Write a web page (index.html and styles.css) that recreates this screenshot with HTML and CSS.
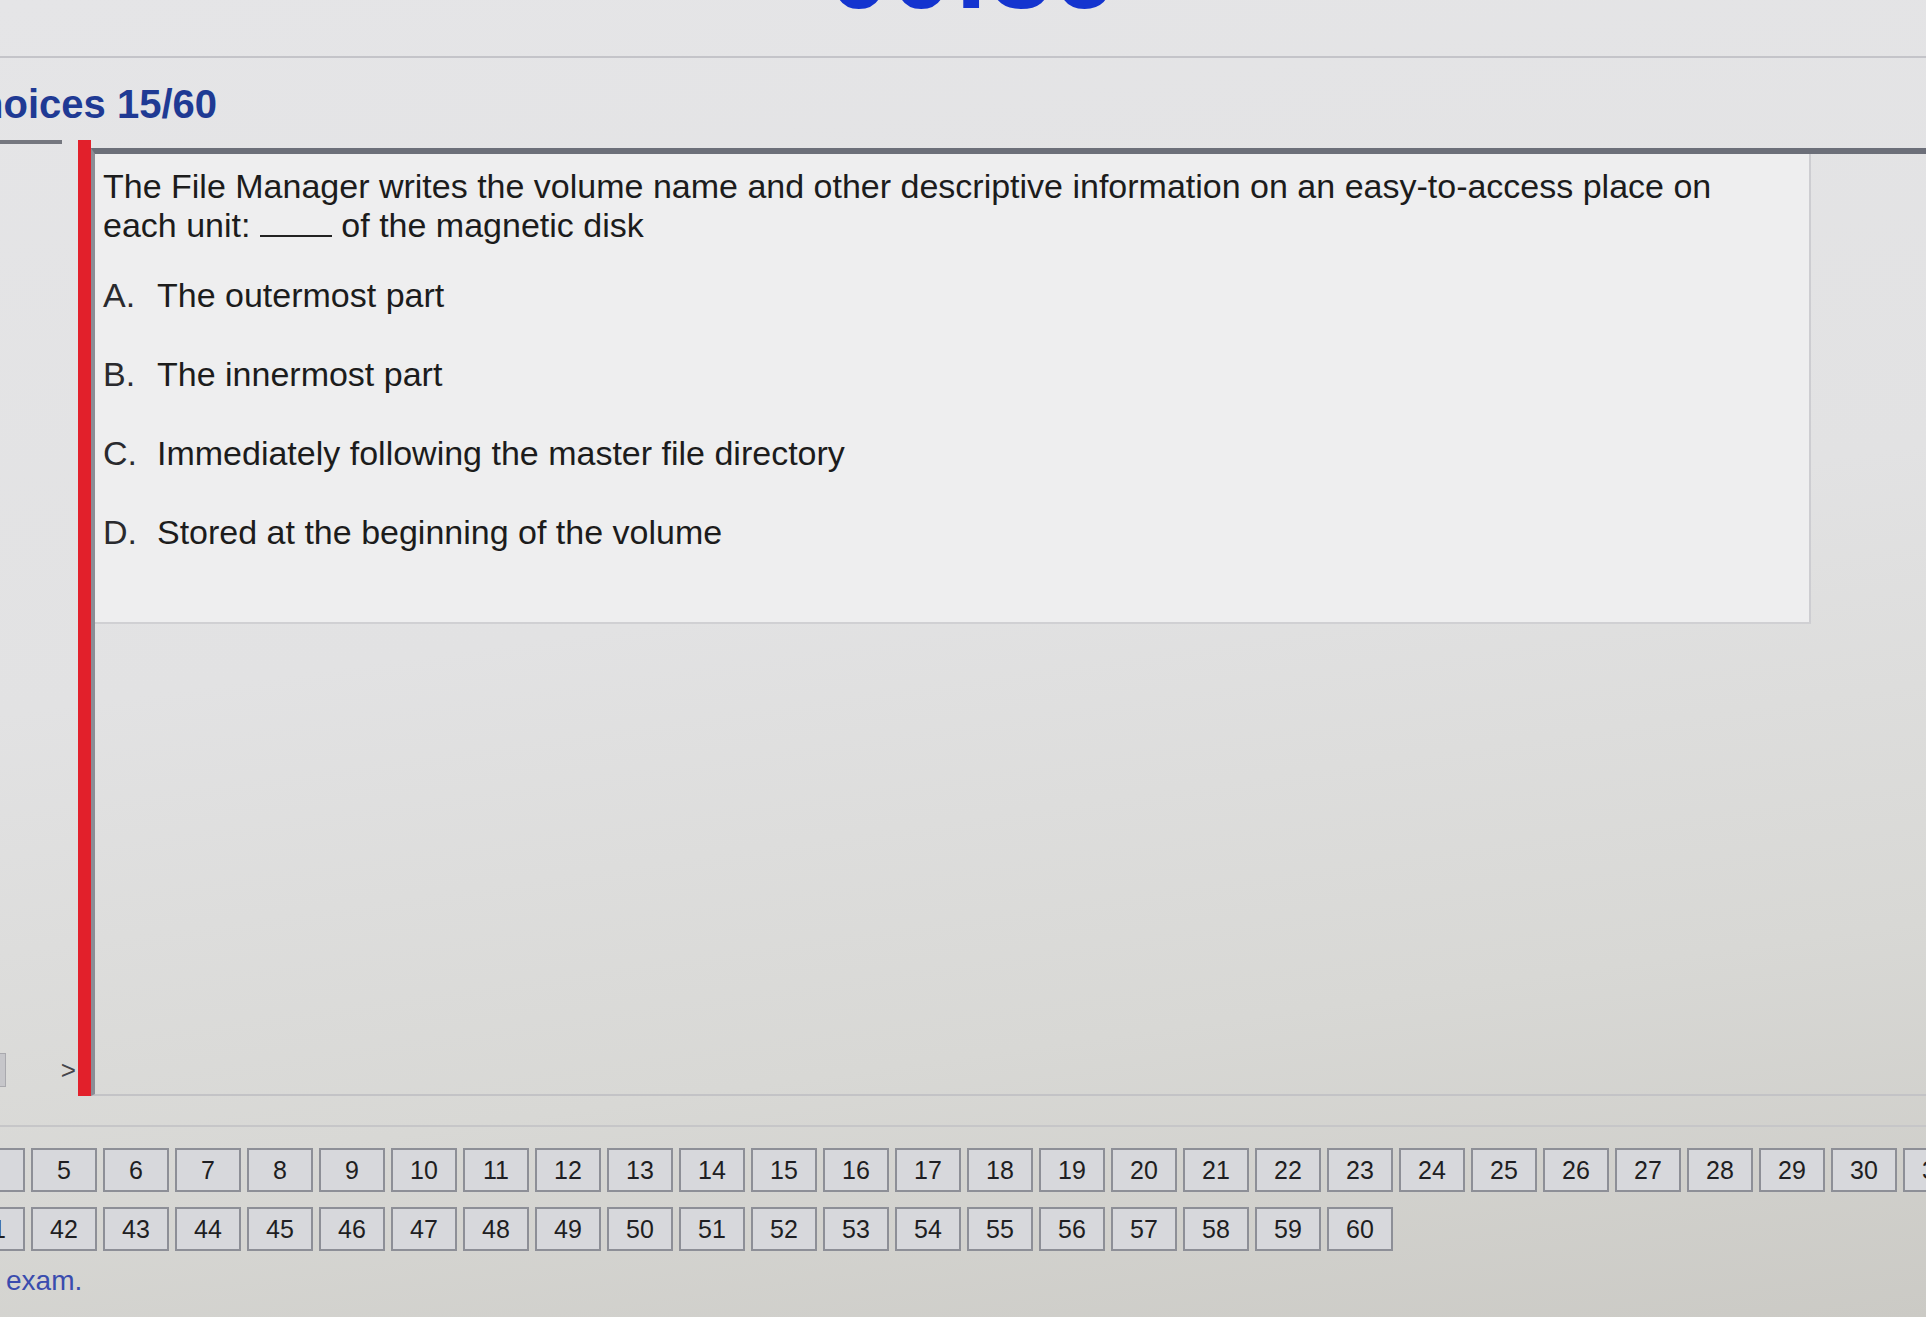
FILE: index.html
```html
<!DOCTYPE html>
<html lang="en">
<head>
<meta charset="utf-8">
<title>Multiple Choices 15/60</title>
<link rel="stylesheet" href="styles.css">
</head>
<body>
<header class="top">
  <div class="timer-clip"><span class="timer">00:36</span></div>
  <div class="rule"></div>
  <h1 class="title">Multiple Choices 15/60</h1>
</header>

<div class="workspace">
  <aside class="sidebar">
    <div class="side-line"></div>
    <div class="side-fill"></div>
    <div class="side-foot">
      <div class="side-tab"></div>
      <span class="side-toggle">&gt;</span>
    </div>
  </aside>
  <div class="red-bar"></div>
  <main class="panel">
    <section class="question">
      <p class="q-text">The File Manager writes the volume name and other descriptive information on an easy-to-access place on<br>each unit: <span class="blank"></span> of the magnetic disk</p>
      <ol class="options">
        <li class="option"><span class="opt-letter">A.</span>The outermost part</li>
        <li class="option"><span class="opt-letter">B.</span>The innermost part</li>
        <li class="option"><span class="opt-letter">C.</span>Immediately following the master file directory</li>
        <li class="option"><span class="opt-letter">D.</span>Stored at the beginning of the volume</li>
      </ol>
    </section>
  </main>
</div>

<div class="nav-rule"></div>
<nav class="qgrid">
  <div class="qbtn">1</div><div class="qbtn">2</div><div class="qbtn">3</div><div class="qbtn">4</div><div class="qbtn">5</div><div class="qbtn">6</div><div class="qbtn">7</div><div class="qbtn">8</div><div class="qbtn">9</div><div class="qbtn">10</div>
  <div class="qbtn">11</div><div class="qbtn">12</div><div class="qbtn">13</div><div class="qbtn">14</div><div class="qbtn">15</div><div class="qbtn">16</div><div class="qbtn">17</div><div class="qbtn">18</div><div class="qbtn">19</div><div class="qbtn">20</div>
  <div class="qbtn">21</div><div class="qbtn">22</div><div class="qbtn">23</div><div class="qbtn">24</div><div class="qbtn">25</div><div class="qbtn">26</div><div class="qbtn">27</div><div class="qbtn">28</div><div class="qbtn">29</div><div class="qbtn">30</div>
  <div class="qbtn">31</div><div class="qbtn">32</div><div class="qbtn">33</div><div class="qbtn">34</div><div class="qbtn">35</div><div class="qbtn">36</div><div class="qbtn">37</div>
  <div class="qbtn">38</div><div class="qbtn">39</div><div class="qbtn">40</div>
  <div class="qbtn">41</div><div class="qbtn">42</div><div class="qbtn">43</div><div class="qbtn">44</div><div class="qbtn">45</div><div class="qbtn">46</div><div class="qbtn">47</div><div class="qbtn">48</div><div class="qbtn">49</div><div class="qbtn">50</div>
  <div class="qbtn">51</div><div class="qbtn">52</div><div class="qbtn">53</div><div class="qbtn">54</div><div class="qbtn">55</div><div class="qbtn">56</div><div class="qbtn">57</div><div class="qbtn">58</div><div class="qbtn">59</div><div class="qbtn">60</div>
</nav>
<p class="note">exam.</p>
</body>
</html>
```

FILE: styles.css
```css
html, body {
  margin: 0;
  padding: 0;
}
body {
  width: 1926px;
  height: 1317px;
  overflow: hidden;
  background: linear-gradient(172deg, #e5e5e7 0%, #e2e2e3 45%, #d8d8d5 75%, #cbcac5 100%);
  font-family: "Liberation Sans", Arial, sans-serif;
  color: #1c1c1c;
}

/* header */
.top {
  height: 140px;
  display: flex;
  flex-direction: column;
}
.timer-clip {
  height: 10px;
  overflow: hidden;
  display: flex;
  align-items: flex-end;
  padding-left: 828px;
}
.timer {
  font-size: 112px;
  font-weight: bold;
  line-height: 80px;
  color: #1434cf;
  white-space: nowrap;
}
.rule {
  height: 2px;
  background: #c4c4c9;
  margin-top: 46px;
}
.title {
  margin: 22px 0 0 0;
  font-size: 40px;
  line-height: 48px;
  font-weight: bold;
  color: #1f3a94;
  white-space: nowrap;
  text-indent: -212px;
}

/* workspace */
.workspace {
  display: flex;
  height: 956px;
}
.sidebar {
  width: 78px;
  display: flex;
  flex-direction: column;
}
.side-line {
  width: 62px;
  height: 4px;
  background: #75777f;
}
.side-fill {
  flex: 1;
}
.side-foot {
  height: 40px;
  display: flex;
  align-items: center;
  justify-content: space-between;
  margin-bottom: 6px;
}
.side-tab {
  width: 5px;
  height: 32px;
  background: #c6c6ca;
  border: 1px solid #a9a9ae;
  border-left: none;
}
.side-toggle {
  font-size: 26px;
  line-height: 30px;
  color: #45464c;
  padding-right: 2px;
}
.red-bar {
  width: 13px;
  background: #e2202b;
}
.panel {
  flex: 1;
  margin-top: 8px;
  border-top: 6px solid #6c6f79;
  border-left: 4px solid #8b8d95;
  border-bottom: 2px solid #c3c3c6;
}
.question {
  box-sizing: border-box;
  width: 1716px;
  height: 470px;
  padding: 13px 10px 0 8px;
  background: #eeeeef;
  border-right: 2px solid #cdcdd1;
  border-bottom: 2px solid #d0d0d3;
}
.q-text {
  margin: 0;
  font-size: 34px;
  line-height: 39px;
  white-space: nowrap;
}
.blank {
  display: inline-block;
  width: 72px;
  border-bottom: 2px solid #222;
}
.options {
  list-style: none;
  margin: 32px 0 0 0;
  padding: 0;
}
.option {
  font-size: 34px;
  line-height: 36px;
  margin-bottom: 43px;
  white-space: nowrap;
}
.opt-letter {
  display: inline-block;
  width: 54px;
  color: #2a2a2e;
}

/* question navigator */
.nav-rule {
  height: 2px;
  background: #c6c6c8;
  margin-top: 29px;
}
.qgrid {
  display: grid;
  grid-template-columns: repeat(37, 66px);
  grid-auto-rows: 44px;
  column-gap: 6px;
  row-gap: 15px;
  margin: 21px 0 0 -257px;
}
.qbtn {
  box-sizing: border-box;
  display: flex;
  align-items: center;
  justify-content: center;
  border: 2px solid #8d8f97;
  background: #d7d8dc;
  font-size: 25px;
  color: #1e1e22;
}
.note {
  margin: 14px 0 0 0;
  padding-left: 6px;
  font-size: 28px;
  line-height: 32px;
  color: #3a4cae;
}
```
